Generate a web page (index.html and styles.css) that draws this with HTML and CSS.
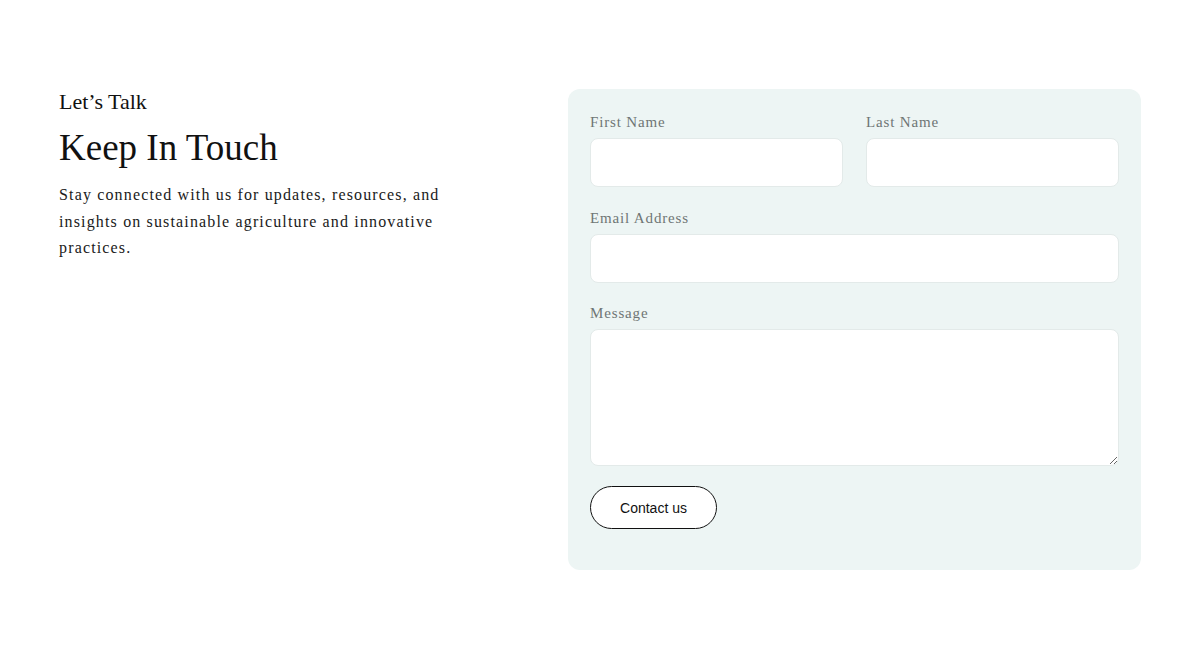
FILE: index.html
```html
<!DOCTYPE html>
<html lang="en">
<head>
  <title>Keep In Touch</title>
  <link rel="stylesheet" href="styles.css">
</head>
<body>

  <section class="contact">
    <div class="intro">
      <p class="eyebrow">Let’s Talk</p>
      <h1>Keep In Touch</h1>
      <p class="lead">Stay connected with us for updates, resources, and insights on sustainable agriculture and innovative practices.</p>
    </div>

    <form class="card">
      <div class="row">
        <div class="field">
          <label for="first">First Name</label>
          <input id="first" type="text">
        </div>
        <div class="field">
          <label for="last">Last Name</label>
          <input id="last" type="text">
        </div>
      </div>
      <div class="field">
        <label for="email">Email Address</label>
        <input id="email" type="email">
      </div>
      <div class="field">
        <label for="msg">Message</label>
        <textarea id="msg"></textarea>
      </div>
      <button type="button" class="btn">Contact us</button>
    </form>
  </section>

</body>
</html>
```

FILE: styles.css
```css
body {
  margin: 0;
  background: #fff;
  font-family: "Liberation Serif", "Times New Roman", serif;
  color: #111;
}

.contact {
  display: flex;
  justify-content: space-between;
  padding: 89px 59px 0;
}

.intro {
  width: 420px;
  padding-top: 1px;
}

.eyebrow {
  margin: 0;
  font-size: 22px;
  line-height: 24px;
}

h1 {
  margin: 12px 0 0;
  font-size: 37px;
  font-weight: normal;
  line-height: 44px;
}

.lead {
  margin: 12px 0 0;
  font-size: 16px;
  line-height: 26.5px;
  letter-spacing: 1.15px;
  color: #1a1a1a;
}

.card {
  width: 529px;
  padding: 24px 22px 41px;
  background: #edf5f4;
  border-radius: 12px;
}

.row {
  display: flex;
  gap: 23px;
}

.row .field {
  flex: 1;
}

.field {
  margin-bottom: 21.5px;
}

label {
  display: block;
  margin-bottom: 6px;
  font-size: 15px;
  line-height: 19px;
  letter-spacing: 0.85px;
  color: #6f7574;
}

input,
textarea {
  display: block;
  box-sizing: border-box;
  width: 100%;
  height: 49px;
  border: 1px solid #e3eae9;
  border-radius: 8px;
  background: #fff;
  font: inherit;
}

textarea {
  height: 137px;
  resize: vertical;
}

.btn {
  display: block;
  width: 127px;
  height: 43px;
  margin-top: -1.5px;
  border: 1px solid #111;
  border-radius: 22px;
  background: #fff;
  font-family: "Liberation Sans", Arial, sans-serif;
  font-size: 14px;
  color: #111;
}
```
